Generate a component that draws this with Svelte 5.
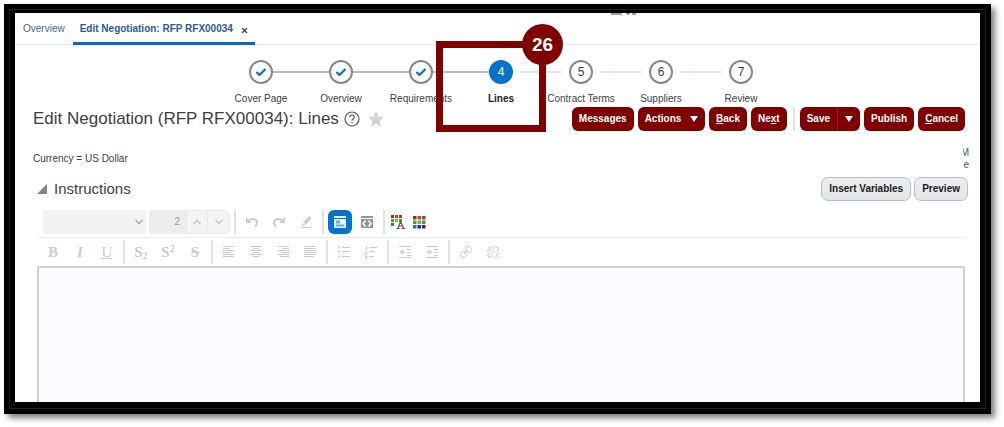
<script>
  const steps = [
    { label: 'Cover Page', state: 'done' },
    { label: 'Overview', state: 'done' },
    { label: 'Requirements', state: 'done' },
    { label: 'Lines', state: 'current' },
    { label: 'Contract Terms', state: 'todo' },
    { label: 'Suppliers', state: 'todo' },
    { label: 'Review', state: 'todo' },
  ];

  const swatches = [
    '#9c2a1c', '#a8501c', '#b5351f',
    '#5c9a2c', '#8fa42a', '#3f9a3c',
    '#1f7c8c', '#1c2f9c', '#3c1c8c',
  ];

  // Icons are drawn on a 16x16 grid
  const bars = (rows) => rows.map(([x, w], i) => `M${x} ${2.5 + i * 2}h${w}`).join('');

  const formatGroups = [
    [
      { name: 'Bold', text: 'B' },
      { name: 'Italic', text: 'I', cls: 'italic' },
      { name: 'Underline', text: 'U', cls: 'underline' },
    ],
    [
      { name: 'Subscript', text: 'S', sub: '2', cls: 'script' },
      { name: 'Superscript', text: 'S', sup: '2', cls: 'script' },
      { name: 'Strikethrough', text: 'S', cls: 'strike' },
    ],
    [
      { name: 'Align left', path: bars([[2, 11], [2, 7], [2, 12], [2, 8], [2, 12], [2, 11]]) },
      { name: 'Center', path: bars([[3, 10], [5, 6], [2, 12], [4, 8], [2, 12], [5, 6]]) },
      { name: 'Align right', path: bars([[3, 11], [7, 7], [2, 12], [6, 8], [2, 12], [5, 9]]) },
      { name: 'Justify', path: bars([[2, 12], [2, 12], [2, 12], [2, 12], [2, 12], [2, 10]]) },
    ],
    [
      { name: 'Bulleted list', path: 'M6 3.5h8M6 7.5h8M6 12.5h8M2 3h2M2 4h2M2 7h2M2 8h2M2 12h2M2 13h2' },
      { name: 'Numbered list', path: 'M6 3.5h8M6 7.5h6M6 12.5h5M3.5 2v4M2 8.5h2v2h-2M2 12.5h2v2h-2' },
    ],
    [
      { name: 'Outdent', path: 'M2 2.5h12M10 5.5h4M10 8.5h3M10 11.5h4M2 13.5h12M9 8h-5M6 6L3 8L6 10z' },
      { name: 'Indent', path: 'M2 2.5h12M10 5.5h4M10 8.5h3M10 11.5h4M2 13.5h12M2 8h5M5 6L8 8L5 10z' },
    ],
    [
      { name: 'Link', path: 'M6 10L10 6M4.500 7.500L2.500 9.500L2.500 11.500L4.500 13.500L6.500 13.500L8.500 11.500L6.500 7.500zM9.500 8.500L11.500 8.500L13.500 6.500L13.500 4.500L11.500 2.500L9.500 2.500L7.500 4.500z' },
      { name: 'Unlink', path: 'M4.500 8.500L2.500 10.500L3.500 13.500L6 13L7.500 11.500M8.500 4.500L10.500 2.500L13.500 3.500L13 6L11.500 7.500M3 3l2 2M6 2v2M2 6.500h2M11 11l2.500 2.500M10 12.500v2M12 10h2.500M7 9L9 7' },
    ],
  ];

  let fontSize = 2;
  let body = '';
</script>

<div class="page">
  <div class="frame">
    <main class="screen">
      <nav class="tabs">
        <a class="tab" href="#overview">Overview</a>
        <div class="tab active">
          <a href="#negotiation">Edit Negotiation: RFP RFX00034</a>
          <button class="close" aria-label="Close tab">
            <svg width="7" height="7" viewBox="0 0 7 7"><path d="M1 1l5 5M6 1L1 6" stroke="#444" stroke-width="1.300" /></svg>
          </button>
        </div>
        <svg class="brand" width="26" height="2" viewBox="0 0 26 2">
          <path d="M0 1h11M21 1h4" stroke="#444" />
          <path d="M15 1.500L16 0h3l-1 1.500z" fill="#2f9a4c" />
        </svg>
      </nav>

      <ol class="stepper">
        {#each steps as step, i}
          <li class="step {step.state}">
            <span class="circle">
              {#if step.state === 'done'}
                <svg width="12" height="10" viewBox="0 0 12 10"><path d="M1.500 5l3 3L10.500 2" fill="none" stroke="#0572ce" stroke-width="2.200" /></svg>
              {:else}
                {i + 1}
              {/if}
            </span>
            <span class="step-label">{step.label}</span>
            {#if step.state === 'current'}
              <div class="callout"><span class="callout-number">26</span></div>
            {/if}
          </li>
        {/each}
      </ol>

      <header class="page-header">
        <h1>Edit Negotiation (RFP RFX00034): Lines</h1>
        <button class="plain" aria-label="Help">
          <svg width="16" height="16" viewBox="0 0 16 16" fill="none" stroke="#555" stroke-width="1.200">
            <circle cx="8" cy="8" r="7" />
            <path d="M5.700 6.300C5.700 3.300 10.300 3.300 10.300 6.100C10.300 7.800 8 7.800 8 9.700" />
            <path d="M8 11v1.500" />
          </svg>
        </button>
        <button class="plain" aria-label="Add to favorites">
          <svg width="16" height="16" viewBox="0 0 16 16"><path d="M8 0l2.200 5.600 5.800.4-4.500 3.800L13 16 8 12.500 3 16l1.500-6.200L0 6l5.800-.4z" fill="#d2d4d6" /></svg>
        </button>
        <div class="actions">
          <button class="primary">Messages</button>
          <button class="primary menu">Actions <span class="arrow"></span></button>
          <button class="primary"><u>B</u>ack</button>
          <button class="primary">Ne<u>x</u>t</button>
          <span class="separator"></span>
          <div class="split">
            <button class="primary">Save</button>
            <button class="primary more" aria-label="More save options"><span class="arrow"></span></button>
          </div>
          <button class="primary">Publish</button>
          <button class="primary"><u>C</u>ancel</button>
        </div>
      </header>

      <div class="meta">
        <span>Currency = US Dollar</span>
        <div class="overflow"><span>M</span><span>e</span></div>
      </div>

      <section class="instructions">
        <div class="section-header">
          <svg width="10" height="10" viewBox="0 0 10 10"><path d="M10 0v10H0z" fill="#7f8488" /></svg>
          <h2>Instructions</h2>
          <div class="section-actions">
            <button class="secondary">Insert Variables</button>
            <button class="secondary">Preview</button>
          </div>
        </div>

        <div class="toolbar">
          <div class="font-select">
            <select aria-label="Font"><option></option></select>
            <svg width="8" height="6" viewBox="0 0 8 6"><path d="M.500 1L4 4.500 7.500 1" fill="none" stroke="#a8a8a8" stroke-width="1.500" /></svg>
          </div>
          <div class="spin">
            <input type="text" aria-label="Font size" bind:value={fontSize} />
            <button aria-label="Larger"><svg width="8" height="6" viewBox="0 0 8 6"><path d="M.500 5L4 1.500 7.500 5" /></svg></button>
            <button aria-label="Smaller"><svg width="8" height="6" viewBox="0 0 8 6"><path d="M.500 1L4 4.500 7.500 1" /></svg></button>
          </div>
          <span class="divider"></span>
          <div class="group">
            <button class="tool" aria-label="Undo">
              <svg width="16" height="16" viewBox="0 0 16 16"><path d="M4 7C8 3.500 13.500 5 13 9c-.2 1.500-1 2.500-2 3.500" fill="none" stroke="#ccc" stroke-width="2" /><path d="M2 3v6h6z" fill="#ccc" /></svg>
            </button>
            <button class="tool" aria-label="Redo">
              <svg width="16" height="16" viewBox="0 0 16 16"><path d="M12 7C8 3.500 2.500 5 3 9c.2 1.500 1 2.500 2 3.500" fill="none" stroke="#ccc" stroke-width="2" /><path d="M14 3v6H8z" fill="#ccc" /></svg>
            </button>
            <button class="tool" aria-label="Clear formatting">
              <svg width="16" height="16" viewBox="0 0 16 16" fill="#ccc"><path d="M11 2l2.500 2L8 10.500 5.500 8.500zM5 9l2.500 2L4 12z" /><path d="M3 13h10v1H3z" /></svg>
            </button>
          </div>
          <span class="divider"></span>
          <div class="group">
            <button class="tool selected" aria-label="Design mode">
              <svg width="14" height="14" viewBox="0 0 14 14"><path d="M1 1h12v2H1zM1 4h12v9H1z" fill="#e5f1fb" /><path d="M3 5.500h4v3H3zM3 9.500h8v2H3z" fill="#69a9df" /></svg>
            </button>
            <button class="tool" aria-label="Source mode">
              <svg width="14" height="14" viewBox="0 0 14 14"><path d="M1 1h12v2H1zM1 4h12v9H1z" fill="#92979b" /><path d="M5.500 5.500L3 8.500l2.500 3M8.500 5.500l2.500 3-2.500 3" fill="none" stroke="#fff" stroke-width="1.500" /></svg>
            </button>
          </div>
          <span class="divider"></span>
          <div class="group colors">
            <button class="tool" aria-label="Text color">
              <svg width="14" height="14" viewBox="0 0 14 14">
                {#each swatches as color, i}
                  {#if i < 7}
                    <rect x={(i % 3) * 4} y={Math.floor(i / 3) * 4} width="3" height="3" fill={color} />
                  {/if}
                {/each}
                <path d="M5.500 13.500h3M10.500 13.500h3.500M7 13L9.500 6.500 12.500 13M8 11h3.500" fill="none" stroke="#555" stroke-width="1.200" />
              </svg>
            </button>
            <button class="tool" aria-label="Background color">
              <svg width="14" height="14" viewBox="0 0 14 14">
                {#each swatches as color, i}
                  <rect x={1 + (i % 3) * 4.5} y={1 + Math.floor(i / 3) * 4.5} width="3.500" height="3.500" fill={color} />
                {/each}
              </svg>
            </button>
          </div>
        </div>

        <div class="toolbar format">
          {#each formatGroups as group, g}
            {#if g > 0}<span class="divider"></span>{/if}
            <div class="group">
              {#each group as tool}
                <button class="tool {tool.cls ?? ''}" aria-label={tool.name}>
                  {#if tool.path}
                    <svg width="16" height="16" viewBox="0 0 16 16"><path d={tool.path} fill="none" stroke="#c8cacb" /></svg>
                  {:else}
                    <span>{tool.text}{#if tool.sub}<sub>{tool.sub}</sub>{/if}{#if tool.sup}<sup>{tool.sup}</sup>{/if}</span>
                  {/if}
                </button>
              {/each}
            </div>
          {/each}
        </div>

        <textarea class="editor" aria-label="Instructions" bind:value={body}></textarea>
      </section>
    </main>
  </div>
</div>

<style>
  :global(body) {
    background: #fff;
  }

  .page {
    box-sizing: border-box;
    display: flex;
    min-height: 100vh;
    padding: 4px 13px 13px 4px;
    font-family: "Liberation Sans", Arial, sans-serif;
    font-size: 10px;
    line-height: 12px;
    color: #3c3f42;
  }

  button,
  input,
  select,
  textarea {
    box-sizing: border-box;
    margin: 0;
    padding: 0;
    border: 0;
    background: none;
    font: inherit;
    color: inherit;
  }

  .frame {
    flex: 1;
    display: flex;
    border: 5px solid #000;
    padding: 4px 6px 7px;
    background: #000;
    box-shadow: inset 0 0 0 1px #222, 4px 4px 6px rgba(0, 0, 0, 0.5);
  }

  .screen {
    flex: 1;
    min-width: 0;
    display: flex;
    flex-direction: column;
    background: #fff;
  }

  .tabs {
    display: flex;
    height: 31px;
    border-bottom: 1px solid #deebef;
  }

  .tabs a {
    color: #4a6792;
    text-decoration: none;
  }

  .tab {
    display: flex;
    align-items: center;
    gap: 8px;
    padding: 0 8px;
  }

  .tab.active {
    box-sizing: border-box;
    height: 32px;
    padding: 3px 7px 0;
    border-bottom: 3px solid #0668c0;
  }

  .tab.active a {
    color: #2b5b96;
    font-weight: bold;
  }

  .close {
    display: flex;
    padding-top: 2px;
  }

  .brand {
    margin-left: auto;
    margin-right: 343px;
  }

  .stepper {
    display: flex;
    justify-content: center;
    margin: 0;
    padding: 15px 0 0 7px;
    list-style: none;
  }

  .step {
    position: relative;
    display: flex;
    flex-direction: column;
    align-items: center;
    gap: 9px;
    width: 80px;
    white-space: nowrap;
  }

  .circle {
    position: relative;
    box-sizing: border-box;
    display: flex;
    align-items: center;
    justify-content: center;
    width: 24px;
    height: 24px;
    border: 2px solid #84898d;
    border-radius: 50%;
    font-size: 12px;
  }

  .current .circle {
    border-color: #0572ce;
    background: #0572ce;
    color: #fff;
  }

  .current .step-label {
    font-weight: bold;
    color: #222;
  }

  /* connector to the previous step */
  .step + .step::before {
    content: "";
    position: absolute;
    top: 11px;
    right: 52px;
    width: 56px;
    height: 2px;
    background: #b4bfc5;
  }

  .step.todo::before {
    right: 59px;
    width: 42px;
    background: #e0e8ea;
  }

  .callout {
    position: absolute;
    z-index: 1;
    top: -19px;
    left: -25px;
    box-sizing: border-box;
    width: 110px;
    height: 91px;
    border: 7px solid #800000;
    pointer-events: none;
  }

  .callout-number {
    position: absolute;
    top: -24px;
    right: -24px;
    width: 41px;
    height: 41px;
    border-radius: 50%;
    background: #800000;
    color: #fff;
    font-size: 19px;
    font-weight: bold;
    line-height: 41px;
    text-align: center;
  }

  .page-header {
    display: flex;
    align-items: center;
    margin-top: 2px;
    padding: 0 15px 0 18px;
  }

  h1 {
    margin: 0;
    font-size: 17px;
    font-weight: normal;
    line-height: 24px;
    white-space: nowrap;
  }

  .plain {
    display: flex;
    margin-left: 5px;
  }

  .plain + .plain {
    margin-left: 8px;
  }

  .actions {
    display: flex;
    align-items: center;
    gap: 4px;
    margin-left: auto;
  }

  .primary {
    display: flex;
    align-items: center;
    height: 24px;
    padding: 0 7px;
    border-radius: 6px;
    background: #800000;
    color: #fff;
    font-weight: bold;
    white-space: pre;
  }

  .menu {
    gap: 6px;
  }

  .arrow {
    border: 4px solid transparent;
    border-top: 6px solid #fff;
    border-bottom: 0;
  }

  .separator {
    width: 2px;
    height: 24px;
    margin: 0 1px 0 2px;
    background: #e0e5e8;
  }

  .split {
    display: flex;
  }

  .split .primary:first-child {
    border-radius: 6px 0 0 6px;
  }

  .split .more {
    border-left: 1px solid #6b3040;
    border-radius: 0 6px 6px 0;
  }

  .meta {
    display: flex;
    align-items: center;
    justify-content: space-between;
    margin-top: 16px;
    padding: 0 11px 0 18px;
  }

  .overflow {
    display: flex;
    flex-direction: column;
    align-items: flex-end;
    width: 6px;
    overflow: hidden;
    color: #2f5f80;
  }

  .instructions {
    flex: 1;
    display: flex;
    flex-direction: column;
    margin-top: 6px;
    padding: 0 15px 0 22px;
  }

  .section-header {
    display: flex;
    align-items: center;
    gap: 7px;
    margin-right: -3px;
    margin-bottom: 9px;
  }

  h2 {
    margin: 0;
    font-size: 15px;
    font-weight: normal;
    line-height: 24px;
  }

  .section-actions {
    display: flex;
    gap: 3px;
    margin-left: auto;
  }

  .secondary {
    height: 24px;
    padding: 0 7px;
    border: 1px solid #b3c0cb;
    border-radius: 7px;
    background: linear-gradient(#eceef0, #e2e5e8);
    color: #1a1a1a;
    font-weight: bold;
  }

  .toolbar {
    display: flex;
    align-items: center;
    padding: 0 0 3px 4px;
    border-bottom: 1px solid #e8ebf1;
  }

  .toolbar.format {
    padding: 2px 0 2px 4px;
    border-bottom: 0;
  }

  .group {
    display: flex;
    gap: 3px;
  }

  .divider {
    width: 2px;
    height: 24px;
    margin: 0 4px;
    background: #dbe3eb;
  }

  .font-select {
    position: relative;
    margin: 0 3px 0 2px;
  }

  .font-select select {
    display: block;
    width: 103px;
    height: 24px;
    border-radius: 2px;
    background: #f2f2f2;
    appearance: none;
  }

  .font-select svg {
    position: absolute;
    top: 9px;
    right: 3px;
    pointer-events: none;
  }

  .spin {
    display: flex;
    width: 81px;
    height: 24px;
  }

  .spin input {
    width: 37px;
    padding-right: 6px;
    border-radius: 2px 0 0 2px;
    background: #ededf0;
    color: #999;
    font-size: 10px;
    text-align: right;
  }

  .spin button {
    display: flex;
    align-items: center;
    justify-content: center;
    width: 22px;
    border: 1px solid #e6e9ec;
    background: #f3f4f6;
  }

  .spin button:last-child {
    border-left: 0;
    border-radius: 0 6px 6px 0;
  }

  .spin path {
    fill: none;
    stroke: #c4c6c8;
    stroke-width: 1.5px;
  }

  .tool {
    display: flex;
    align-items: center;
    justify-content: center;
    width: 24px;
    height: 24px;
    color: #cbcdce;
    font-family: "Liberation Serif", "Times New Roman", serif;
    font-size: 15px;
    font-weight: bold;
    line-height: 16px;
  }

  .tool.script {
    font-weight: normal;
    color: #b9bbbc;
  }

  .tool sub,
  .tool sup {
    font-size: 10px;
    line-height: 0;
  }

  .tool sub {
    vertical-align: -2px;
  }

  .tool sup {
    vertical-align: 5px;
  }

  .tool.italic {
    font-style: italic;
  }

  .tool.underline {
    font-weight: normal;
  }

  .tool.underline span {
    text-decoration: underline;
  }

  .tool.strike span {
    text-decoration: line-through;
  }

  .tool.selected {
    border-radius: 6px;
    background: #0572ce;
  }

  .colors .tool {
    width: 18px;
  }

  .editor {
    flex: 1;
    min-height: 80px;
    border: 2px solid #cad2d8;
    border-bottom: 0;
    border-radius: 2px 2px 0 0;
    background: #fbfcff;
    resize: none;
  }
</style>
